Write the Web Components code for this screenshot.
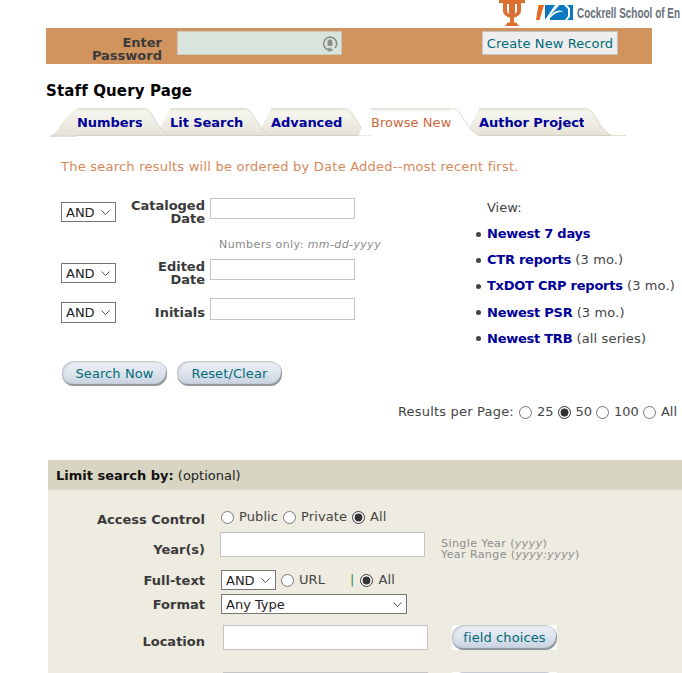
<!DOCTYPE html>
<html lang="en"><head><meta charset="utf-8"><title>Staff Query Page</title>
<style>
html,body{margin:0;padding:0;background:#fff;overflow:hidden}
body{font:13px/1.2 "DejaVu Sans",Verdana,sans-serif;color:#333}
</style></head><body>
<query-page></query-page>
<script>
const def=(name,html,setup)=>{customElements.define(name,class extends HTMLElement{
  constructor(){super();const s=this.attachShadow({mode:'open'});s.innerHTML=html;}
  connectedCallback(){setup&&setup(this)}
})};
const FIELD=`box-sizing:border-box;border:1px solid #c4c4c4;background:#fff;margin:0;padding:0 4px;font:13px "DejaVu Sans",sans-serif;display:block;`;
const SEL=`box-sizing:border-box;border:1px solid #767676;border-radius:0;background:#fff;color:#222;margin:0;font:13px "DejaVu Sans",sans-serif;display:block;padding:0 0 0 4px;appearance:none;-webkit-appearance:none;`;
const CHEV=`<svg class="chev" width="9" height="5" viewBox="0 0 9 5"><path d="M.5.5 4.500 4.500 8.500.5" fill="none" stroke="#555" stroke-width="1"/></svg>`;

def('top-logos',`<style>
:host{display:block;height:28px;overflow:hidden;padding-left:499px;box-sizing:border-box;width:682px}
.wrap{display:flex;width:183px;overflow:hidden}
svg{flex:none;display:block}
.name{font:bold 15px/28px "Liberation Sans",sans-serif;color:#687078;transform:scaleX(.665);transform-origin:0 50%;white-space:nowrap;margin-left:4px;margin-top:-1px}
</style><div class="wrap">
<svg width="26" height="28" viewBox="0 0 26 28" style="margin-right:11px">
<path fill="#dc6f2f" d="M0 0H26V3H22V10.500C22 14.500 18.500 17 15 17.500V22.500H17.500L20 26H6L8.500 22.500H11V17.500C7.500 17 4 14.500 4 10.500V3H0z"/>
<path fill="#fff" d="M8 4H10V14C8.800 13.200 8 12 8 10.500zM16 4H18V10.500C18 12 17.200 13.200 16 14z"/></svg>
<svg width="37" height="28" viewBox="0 0 37 28">
<path fill="#e8681f" d="M2.500 5H8L3.500 20H0z"/>
<path fill="#0a78c0" d="M9 5h28v15H9z"/>
<path fill="#fff" d="M9 20 19 5h4.500L13 16.500c4-4 9-7.500 13-5.500 1.500 1 3 4 3 9z"/>
<path fill="#0a78c0" d="M14 18c4-4 9-7 12.500-6 2 .6 2.500 4 2.800 8H14z"/>
<path fill="#fff" d="M28 5h3l3 3v9l-3 3h-2l3-4V9z"/></svg>
<div class="name">Cockrell School of En</div></div>`);

def('pass-bar',`<style>
:host{display:flex;box-sizing:border-box;width:606px;height:36px;margin-left:46px;background:#d1945f;padding-top:3px;align-items:flex-start}
.lab{width:116px;flex:none;text-align:right;font:bold 13px/13px "DejaVu Sans",sans-serif;color:#3a3a3a;padding-top:5px}
.box{position:relative;margin-left:15px;flex:none;width:165px;height:24px}
input{${FIELD}width:165px;height:24px;background:#d8e4dc;border:1px solid #c9c9bd}
svg{position:absolute;right:4px;top:4px}
.act{margin-left:140px;box-sizing:border-box;height:24px;width:136px;flex:none;background:#eee;border:1px solid #c2c2c2;padding:0;font:13px "DejaVu Sans",sans-serif;color:#006a78;letter-spacing:.1px}
</style><div class="lab">Enter<br>Password</div>
<div class="box"><input type="password" aria-label="Enter Password">
<svg width="16" height="17" viewBox="0 0 16 17"><path fill="none" stroke="#8a8f8c" stroke-width="1.600" d="M11 14.500A6.500 6.500 0 1 1 13 13"/><path fill="none" stroke="#8a8f8c" stroke-width="1.500" d="M8.500 16.500 6 14.500 9 13"/><circle cx="8" cy="7" r="2.500" fill="#8a8f8c"/><rect x="5.500" y="7.500" width="5" height="3.500" rx="1" fill="#8a8f8c"/></svg></div>
<button class="act">Create New Record</button>`);

def('page-title',`<style>:host{display:block;margin:18px 0 0 46px;font:bold 15px/18px "DejaVu Sans",sans-serif;color:#000;letter-spacing:.13px}</style><slot></slot>`);

def('tab-item',`<style>
:host{display:flex;position:relative;height:28px;flex:none;align-items:stretch}
.t{display:block;width:var(--tw);background:linear-gradient(#dedcd2 0,#f4f3ec 3px,#f4f3ec 8px,#e5e3d6 27px);border-bottom:1px solid #d2d0c2;box-sizing:border-box;font:bold 13px/29px "DejaVu Sans",sans-serif;letter-spacing:-.05px;color:#000099;white-space:nowrap}
.t.on{background:linear-gradient(#e0ded4 0,#fff 4px);border-bottom:0;font-weight:normal;color:#d0693c;letter-spacing:.05px}
svg{display:block;flex:none}
.l{position:absolute;left:-13px;top:0;z-index:-1}
:host([active]) .l{z-index:1}
:host([active]){z-index:2}
</style>
<svg class="l" width="13" height="28" viewBox="0 0 13 28"><defs><linearGradient id="g" x1="0" y1="0" x2="0" y2="1"><stop class="a" offset="0"/><stop class="b" offset=".25"/><stop class="c" offset="1"/></linearGradient></defs><path fill="url(#g)" d="M0 27.500C3 25 6 10 13 1V27.500z"/></svg>
<span class="t"><slot></slot></span>
<svg class="r" width="28" height="28" viewBox="0 0 28 28"><path fill="url(#g)" d="M0 1C6 1 8 4 11 9 15 16 20 24 28 27.500H0z"/><path class="re" fill="none" d="M0 .8C6 .8 8 3 11 8.500 15 15 20 24 28 27.500"/><path class="bt" d="M0 27h28v1H0z"/></svg>`,
el=>{const on=el.hasAttribute('active'),s=el.shadowRoot;
 if(on)s.querySelector('.t').classList.add('on');
 const set=(c,v)=>s.querySelector('.'+c).setAttribute('stop-color',v);
 set('a',on?'#fff':'#f4f3ec');set('b',on?'#fff':'#f4f3ec');set('c',on?'#fff':'#e5e3d6');
 s.querySelector('.re').setAttribute('stroke',on?'#dedcd2':'#d6d4c8');
 s.querySelector('.bt').setAttribute('fill',on?'transparent':'#d2d0c2');
});

def('tab-bar',`<style>
:host{display:flex;height:28px;margin-top:8px;padding-left:77px;position:relative;z-index:0;isolation:isolate}
.start{position:absolute;left:50px;top:0}
.end{height:1px;width:14px;margin-top:27px;background:#e2e0d4;flex:none}
</style>
<svg class="start" width="27" height="29" viewBox="0 0 27 29"><defs><linearGradient id="s" x1="0" y1="0" x2="0" y2="1"><stop offset=".1" stop-color="#f4f3ec"/><stop offset="1" stop-color="#e5e3d6"/></linearGradient></defs><path fill="url(#s)" d="M0 28C8 26 12 10 26 1H27V28z"/><path fill="#d4d2c4" d="M0 27.500H27V29H0z" opacity=".7"/></svg>
<slot></slot><div class="end"></div>`);

def('intro-line',`<style>:host{display:block;margin:23px 0 0 61px;font:13px/16px "DejaVu Sans",sans-serif;color:#d6895b;white-space:nowrap;letter-spacing:.23px}</style><slot></slot>`);

def('and-select',`<style>:host{display:block;flex:none;position:relative}
select{${SEL}width:55px;height:var(--sh,20px)}
.chev{position:absolute;right:6px;top:8px;pointer-events:none}</style><select aria-label="Operator"><option>AND</option></select>${CHEV}`);

def('date-row',`<style>
:host{display:flex;align-items:flex-start;height:var(--rowh)}
and-select{margin-top:var(--st)}
.lab{width:89px;flex:none;text-align:right;font:bold 13px/13px "DejaVu Sans",sans-serif;color:#3a3a3a;margin-top:var(--lt);}
input{${FIELD}width:145px;height:var(--ih,21px);margin-left:5px}
</style><and-select></and-select><div class="lab"><slot></slot></div><input type="text">`);

def('hint-line',`<style>:host{display:block;margin-left:158px;padding-top:1px;font:11px/13px "DejaVu Sans",sans-serif;color:#8a8a8a;letter-spacing:.4px;height:21px;white-space:nowrap}</style><slot></slot>`);

def('pill-button',`<style>
:host{display:inline-block;flex:none}
button{display:block;box-sizing:border-box;width:105px;height:25px;border:0;padding:0;border-radius:12px;background:linear-gradient(#eef1f6,#dfe5ee 45%,#c4cfdc);box-shadow:inset -1px -2px 1px #8f9399,inset 1px 1px 2px #b9bec5;font:13px "DejaVu Sans",sans-serif;color:#006a78;letter-spacing:.1px}
.corner{background:var(--corner,transparent);display:block}
</style><span class="corner"><button><slot></slot></button></span>`);

def('view-links',`<style>
:host{display:block;flex:none;width:208px;font:13px/26.2px "DejaVu Sans",sans-serif;color:#444;white-space:nowrap}
.v{margin:2px 0 0 13px;line-height:16px;height:21px}
ul{margin:0;padding:0 0 0 13px;list-style:none;letter-spacing:.13px}
li::before{content:"";display:inline-block;width:5px;height:5px;border-radius:50%;background:#444;margin:0 6px 1px -11px;vertical-align:middle}
b{color:#000099;letter-spacing:-.25px}
</style><div class="v">View:</div><ul>
<li><b>Newest 7 days</b></li>
<li><b>CTR reports</b> (3 mo.)</li>
<li><b>TxDOT CRP reports</b> (3 mo.)</li>
<li><b>Newest PSR</b> (3 mo.)</li>
<li><b>Newest TRB</b> (all series)</li></ul>`);

const R=(n,t,c)=>`<input type="radio" name="${n}"${c?' checked':''} aria-label="${t}"><span>${t}</span>`;
const RC=`input{margin:0 5px 0 0;width:13px;height:13px;flex:none;accent-color:#333}span{margin-right:4px}`;

def('results-per',`<style>
:host{display:flex;justify-content:flex-end;align-items:center;margin:18px 5px 0 0;height:16px;font:13px/16px "DejaVu Sans",sans-serif;color:#444;white-space:nowrap}
${RC}
.lab{margin-right:5px;letter-spacing:.2px}
</style><span class="lab">Results per Page:</span>${R('rp','25')}${R('rp','50',1)}${R('rp','100')}<input type="radio" name="rp" aria-label="All"><span style="margin:0">All</span>`);

def('limit-panel',`<style>
:host{display:block;margin:40px 0 0 48px;background:#eeebe0;height:213px;overflow:hidden;color:#444}
.hd{background:#d8d5c2;height:30px;padding-left:8px;font:13px/31px "DejaVu Sans",sans-serif;color:#222}
.hd b{color:#111}
</style><div class="hd"><b>Limit search by:</b> (optional)</div><slot></slot>`);

def('limit-row',`<style>
:host{display:flex;align-items:flex-start;height:var(--rowh);font:13px/16px "DejaVu Sans",sans-serif;color:#444;white-space:nowrap;margin-top:var(--mt,0)}
.lab{width:157px;flex:none;text-align:right;font:bold 13px/16px "DejaVu Sans",sans-serif;color:#3a3a3a;margin-top:var(--lt,0)}
.c{display:flex;align-items:center;margin-left:var(--cl,15px);height:var(--ch,auto)}
</style><div class="lab"></div><div class="c"><slot></slot></div>`,
el=>{el.shadowRoot.querySelector('.lab').textContent=el.getAttribute('label')});

def('radio-set',`<style>:host{display:flex;align-items:center;color:#444}${RC}span{margin-right:5px;letter-spacing:.1px}</style>`,
el=>{const s=el.shadowRoot;if(s.querySelector('input'))return;
 const n=el.getAttribute('name'),chk=el.getAttribute('checked');
 s.innerHTML+=el.getAttribute('items').split(',').map(t=>R(n,t,t===chk)).join('');});

def('text-box',`<style>:host{display:block;flex:none}input{${FIELD}width:205px;height:25px}</style><input type="text">`);
def('year-hint',`<style>:host{display:block;margin-left:16px;font:11px/11px "DejaVu Sans",sans-serif;color:#8d8d8d;letter-spacing:.42px;padding-top:8px}</style><slot></slot>`);
def('format-select',`<style>:host{display:block;position:relative}select{${SEL}width:186px;height:20px}.chev{position:absolute;right:5px;top:8px;pointer-events:none}</style><select aria-label="Format"><option>Any Type</option></select>${CHEV}`);

def('query-page',`<style>
:host{display:block;width:682px;height:673px;overflow:hidden;position:relative}
.form{display:flex;margin-top:23px;padding-left:61px}
.left{width:413px;flex:none}
.btns{display:flex;gap:10px;margin:-1px 0 0 1px}
.sep{color:#3a8a3a;margin:0 6px 0 20px}
</style>
<top-logos></top-logos>
<pass-bar></pass-bar>
<page-title>Staff Query Page</page-title>
<tab-bar>
<tab-item style="--tw:65px">Numbers</tab-item>
<tab-item style="--tw:73px">Lit Search</tab-item>
<tab-item style="--tw:72px">Advanced</tab-item>
<tab-item active style="--tw:80px">Browse New</tab-item>
<tab-item style="--tw:105px">Author Project</tab-item>
</tab-bar>
<intro-line>The search results will be ordered by Date Added--most recent first.</intro-line>
<div class="form">
 <div class="left">
  <date-row style="--rowh:39px;--st:4px;--lt:1px">Cataloged<br>Date</date-row>
  <hint-line>Numbers only: <i>mm-dd-yyyy</i></hint-line>
  <date-row style="--rowh:39px;--st:4px;--lt:1px">Edited<br>Date</date-row>
  <date-row style="--rowh:64px;--st:4px;--lt:8px;--ih:22px;--sh:21px">Initials</date-row>
  <div class="btns"><pill-button>Search Now</pill-button><pill-button>Reset/Clear</pill-button></div>
 </div>
 <view-links></view-links>
</div>
<results-per></results-per>
<limit-panel>
 <limit-row label="Access Control" style="--rowh:23px;--mt:19px;--lt:3px;--cl:16px;--ch:16px"><radio-set name="ac" items="Public,Private,All" checked="All"></radio-set></limit-row>
 <limit-row label="Year(s)" style="--rowh:38px;--lt:10px;--ch:25px"><text-box></text-box><year-hint>Single Year (<i>yyyy</i>)<br>Year Range (<i>yyyy:yyyy</i>)</year-hint></limit-row>
 <limit-row label="Full-text" style="--rowh:24px;--lt:3px;--cl:16px;--ch:20px"><and-select></and-select><radio-set name="ft" items="URL" style="margin-left:5px"></radio-set><span class="sep" style="color:#3a8a3a;margin:0 6px 0 20px">|</span><radio-set name="ft2" items="All" checked="All"></radio-set></limit-row>
 <limit-row label="Format" style="--rowh:31px;--cl:16px;--ch:20px;--lt:3px"><format-select></format-select></limit-row>
 <limit-row label="Location" style="--rowh:47px;--lt:9px;--cl:18px;--ch:25px"><text-box></text-box><pill-button style="margin-left:24px;--corner:#fff">field choices</pill-button></limit-row>
 <limit-row label="" style="--rowh:25px;--cl:18px;--ch:25px"><text-box></text-box><pill-button style="margin-left:24px;--corner:#fff"></pill-button></limit-row>
</limit-panel>`);
</script>
</body></html>
